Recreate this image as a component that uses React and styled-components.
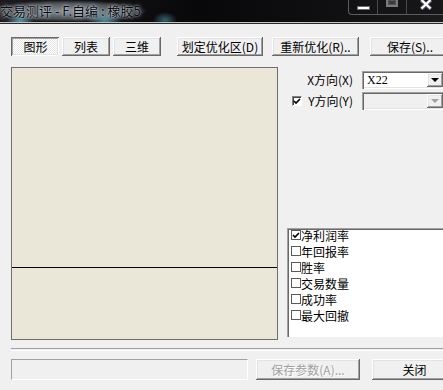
import React from "react";
import styled, { createGlobalStyle, css } from "styled-components";

const GlobalStyle = createGlobalStyle`
  html, body {
    margin: 0;
    padding: 0;
    background: #f0f0f0;
  }
  body {
    font-family: "Noto Sans CJK SC", "Liberation Sans", sans-serif;
    font-size: 12px;
    color: #000;
  }
`;

const Window = styled.div`
  width: 443px;
  height: 390px;
  overflow: hidden;
  background: #f0f0f0;
  display: flex;
  flex-direction: column;
`;

const TitleBar = styled.div`
  flex: none;
  height: 24px;
  display: flex;
  align-items: flex-start;
  background:
    linear-gradient(to bottom, transparent 22px, #c4c4c4 22px, #c4c4c4 23px, #2a2a2a 23px),
    radial-gradient(ellipse 80px 11px at 68px 11px, rgba(160, 172, 178, 0.8), rgba(150, 160, 168, 0.45) 70%, transparent),
    radial-gradient(ellipse 14px 10px at 20px 22px, rgba(110, 200, 215, 0.75), transparent),
    radial-gradient(ellipse 18px 12px at 105px 20px, rgba(100, 190, 210, 0.7), transparent),
    radial-gradient(ellipse 12px 8px at 165px 20px, rgba(90, 170, 190, 0.55), transparent),
    linear-gradient(to right, #1b1a1e, #08080a 45%, #111114 80%, #1c1c1e);
`;

const Title = styled.div`
  padding-top: 3px;
  font-size: 13px;
  line-height: 16px;
  color: #0a0a10;
  white-space: nowrap;
  text-shadow:
    0 0 2px rgba(225, 235, 240, 0.9),
    0 0 5px rgba(200, 215, 225, 0.7);
`;

const Controls = styled.div`
  margin-left: auto;
  width: 94px;
  height: 14px;
  flex: none;
  display: flex;
  border-left: 1px solid #5c5c5c;
  border-bottom: 1px solid #5c5c5c;
  border-bottom-left-radius: 4px;
  background: rgba(20, 20, 22, 0.6);
`;

const CtrlBox = styled.div`
  width: ${(p) => p.$w}px;
  flex: none;
  display: flex;
  justify-content: center;
  border-right: ${(p) => (p.$last ? "none" : "1px solid #4a4a4a")};
`;

const MinGlyph = styled.span`
  margin-top: 6px;
  width: 11px;
  height: 2px;
  background: #fff;
  border: 1px solid #6a6a6a;
`;

const MaxGlyph = styled.span`
  width: 8px;
  height: 5px;
  border: 2px solid #7a7a7a;
  border-top: none;
  background: #3a3a3a;
  box-shadow: inset 0 0 0 1px #555;
`;

const Client = styled.div`
  flex: 1;
  display: flex;
  flex-direction: column;
  padding-left: 11px;
`;

const Toolbar = styled.div`
  display: flex;
  margin-top: 13px;
  height: 19px;
`;

const raised = css`
  background: #f0f0f0;
  box-shadow:
    inset -1px -1px #696969,
    inset 1px 1px #ffffff,
    inset -2px -2px #a0a0a0,
    inset 2px 2px #e3e3e3;
`;

const sunkenBtn = css`
  background-color: #fbfbfb;
  background-image: repeating-conic-gradient(#ffffff 0 25%, #e6e6e6 0 50%);
  background-size: 2px 2px;
  box-shadow:
    inset 1px 1px #696969,
    inset -1px -1px #ffffff,
    inset 2px 2px #a0a0a0,
    inset -2px -2px #e3e3e3;
  padding-top: 1px;
  padding-left: 1px;
`;

const Button = styled.div`
  box-sizing: border-box;
  flex: none;
  width: ${(p) => p.$w}px;
  height: ${(p) => p.$h || 19}px;
  margin-left: ${(p) => p.$ml || 0}px;
  display: flex;
  align-items: center;
  justify-content: center;
  line-height: 12px;
  white-space: nowrap;
  ${(p) => (p.$pressed ? sunkenBtn : raised)};
  color: ${(p) => (p.$disabled ? "#a0a0a0" : "#000")};
  text-shadow: ${(p) => (p.$disabled ? "1px 1px #ffffff" : "none")};
`;

const Main = styled.div`
  display: flex;
  margin-top: 11px;
  height: 273px;
  gap: 9px;
`;

const Chart = styled.div`
  box-sizing: border-box;
  flex: none;
  width: 267px;
  height: 273px;
  background: #eae7d8;
  border: 1px solid #6e6e6e;
`;

const ChartSvg = styled.svg`
  display: block;
  width: 100%;
  height: 100%;
`;

const Side = styled.div`
  flex: none;
  width: 160px;
  display: flex;
  flex-direction: column;
`;

const FieldRow = styled.div`
  display: flex;
  align-items: center;
  height: 18px;
  margin-top: ${(p) => p.$mt}px;
`;

const LabelCell = styled.div`
  box-sizing: border-box;
  width: 75px;
  flex: none;
  display: flex;
  align-items: center;
  padding-left: 5px;
  padding-right: 9px;
  gap: 3px;
  white-space: nowrap;
  line-height: 12px;
`;

const LabelText = styled.span`
  margin-left: auto;
`;

const Combo = styled.div`
  box-sizing: border-box;
  width: 81px;
  height: 18px;
  flex: none;
  display: flex;
  align-items: stretch;
  padding: 2px 0 2px 2px;
  background: ${(p) => (p.$disabled ? "#f0f0f0" : "#ffffff")};
  box-shadow:
    inset 1px 1px #a0a0a0,
    inset 2px 2px #696969,
    inset -1px -1px #ffffff,
    inset -2px -2px #e3e3e3;
`;

const ComboText = styled.div`
  flex: 1;
  padding-left: 3px;
  display: flex;
  align-items: center;
  font-family: "Liberation Serif", "Noto Sans CJK SC", serif;
  font-size: 12px;
`;

const ComboArrow = styled.div`
  width: 16px;
  flex: none;
  display: flex;
  align-items: center;
  justify-content: center;
  ${raised};
  &::after {
    content: "";
    border-left: 4px solid transparent;
    border-right: 4px solid transparent;
    border-top: 4px solid ${(p) => (p.$disabled ? "#a0a0a0" : "#000")};
  }
`;

const CheckSquare = styled.span`
  box-sizing: border-box;
  width: 10px;
  height: 10px;
  flex: none;
  background: #fff;
  display: flex;
  align-items: center;
  justify-content: center;
  ${(p) =>
    p.$flat
      ? css`
          border: 1px solid #5a5a5a;
        `
      : css`
          border-top: 1px solid #808080;
          border-left: 1px solid #808080;
          border-right: 1px solid #ffffff;
          border-bottom: 1px solid #ffffff;
          box-shadow: inset 1px 1px #404040;
        `}
`;

const ListBox = styled.div`
  box-sizing: border-box;
  margin-top: auto;
  margin-bottom: 3px;
  height: 109px;
  background: #fff;
  border-top: 1px solid #a0a0a0;
  border-left: 1px solid #a0a0a0;
  box-shadow: inset 1px 1px #696969;
  padding: 1px 0 0 3px;
`;

const ListItem = styled.div`
  display: flex;
  align-items: flex-start;
  height: 16px;
  line-height: 11px;
  box-sizing: border-box;
  white-space: nowrap;
`;

const Separator = styled.div`
  margin-top: 8px;
  height: 1px;
  border-top: 1px solid #a0a0a0;
  border-bottom: 1px solid #ffffff;
`;

const Footer = styled.div`
  display: flex;
  margin-top: 8px;
  height: 21px;
`;

const Status = styled.div`
  box-sizing: border-box;
  width: 237px;
  height: 21px;
  flex: none;
  border-top: 1px solid #a0a0a0;
  border-left: 1px solid #a0a0a0;
  border-right: 1px solid #ffffff;
  border-bottom: 1px solid #ffffff;
`;

const Tick = () => (
  <svg width="8" height="7" viewBox="0 0 8 7">
    <path d="M1 3 L3 5 L7 1" stroke="#000" strokeWidth="1.6" fill="none" />
  </svg>
);

const metrics = [
  { name: "净利润率", on: true },
  { name: "年回报率" },
  { name: "胜率" },
  { name: "交易数量" },
  { name: "成功率" },
  { name: "最大回撤" },
];

export default function App() {
  return (
    <>
      <GlobalStyle />
      <Window>
        <TitleBar>
          <Title>交易测评 - F.自编 : 橡胶5</Title>
          <Controls>
            <CtrlBox $w={28}>
              <MinGlyph />
            </CtrlBox>
            <CtrlBox $w={28}>
              <MaxGlyph />
            </CtrlBox>
            <CtrlBox $w={37} $last>
              <svg width="12" height="10" viewBox="0 0 12 10">
                <path d="M1 0 L11 9 M11 0 L1 9" stroke="#5a5a6a" strokeWidth="4" />
                <path d="M1.5 0 L10.5 8.5 M10.5 0 L1.5 8.5" stroke="#fff" strokeWidth="2.2" />
              </svg>
            </CtrlBox>
          </Controls>
        </TitleBar>
        <Client>
          <Toolbar>
            <Button $w={48} $pressed>图形</Button>
            <Button $w={48} $ml={3}>列表</Button>
            <Button $w={48} $ml={3}>三维</Button>
            <Button $w={86} $ml={16}>划定优化区(D)</Button>
            <Button $w={87} $ml={9}>重新优化(R)..</Button>
            <Button $w={80} $ml={11}>保存(S)..</Button>
          </Toolbar>
          <Main>
            <Chart>
              <ChartSvg viewBox="0 0 265 271" preserveAspectRatio="none">
                <line x1="0" y1="199.5" x2="265" y2="199.5" stroke="#000" strokeWidth="1" />
              </ChartSvg>
            </Chart>
            <Side>
              <FieldRow $mt={4}>
                <LabelCell>
                  <LabelText>X方向(X)</LabelText>
                </LabelCell>
                <Combo>
                  <ComboText>X22</ComboText>
                  <ComboArrow />
                </Combo>
              </FieldRow>
              <FieldRow $mt={3}>
                <LabelCell>
                  <CheckSquare>
                    <Tick />
                  </CheckSquare>
                  <LabelText>Y方向(Y)</LabelText>
                </LabelCell>
                <Combo $disabled>
                  <ComboText />
                  <ComboArrow $disabled />
                </Combo>
              </FieldRow>
              <ListBox>
                {metrics.map((m) => (
                  <ListItem key={m.name}>
                    <CheckSquare $flat>{m.on && <Tick />}</CheckSquare>
                    {m.name}
                  </ListItem>
                ))}
              </ListBox>
            </Side>
          </Main>
          <Separator />
          <Footer>
            <Status />
            <Button $w={104} $h={21} $ml={8} $disabled>
              保存参数(A)...
            </Button>
            <Button $w={85} $h={21} $ml={12}>
              关闭
            </Button>
          </Footer>
        </Client>
      </Window>
    </>
  );
}
